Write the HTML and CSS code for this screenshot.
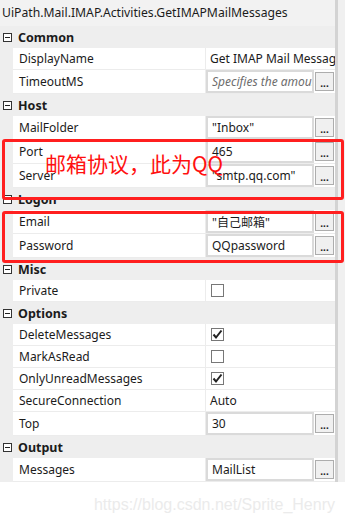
FILE: index.html
```html
<!DOCTYPE html>
<html lang="zh-CN">
  <head>
    <meta charset="UTF-8" />
    <meta name="viewport" content="width=device-width, initial-scale=1.0" />
    <title>GetIMAPMailMessages properties</title>
    <link rel="stylesheet" href="styles.css">
  </head>
  <body>
    <div class="panel">
      <div class="grid">
        <div class="title">UiPath.Mail.IMAP.Activities.GetIMAPMailMessages</div>

        <div class="cat"><span class="toggle"></span>Common</div>
        <div class="row">
          <div class="name">DisplayName</div>
          <div class="val">Get IMAP Mail Messages</div>
        </div>
        <div class="row tall">
          <div class="name">TimeoutMS</div>
          <div class="val"><span class="box ph">Specifies the amount of time</span><span class="dots">...</span></div>
        </div>

        <div class="cat"><span class="toggle"></span>Host</div>
        <div class="row tall">
          <div class="name">MailFolder</div>
          <div class="val"><span class="box">"Inbox"</span><span class="dots">...</span></div>
        </div>
        <div class="row tall">
          <div class="name">Port</div>
          <div class="val"><span class="box">465</span><span class="dots">...</span></div>
        </div>
        <div class="row tall">
          <div class="name">Server</div>
          <div class="val"><span class="box">"smtp.qq.com"</span><span class="dots">...</span></div>
        </div>

        <div class="cat"><span class="toggle"></span>Logon</div>
        <div class="row tall">
          <div class="name">Email</div>
          <div class="val"><span class="box">"自己邮箱"</span><span class="dots">...</span></div>
        </div>
        <div class="row tall">
          <div class="name">Password</div>
          <div class="val"><span class="box">QQpassword</span><span class="dots">...</span></div>
        </div>

        <div class="cat"><span class="toggle"></span>Misc</div>
        <div class="row">
          <div class="name">Private</div>
          <div class="val"><span class="check"></span></div>
        </div>

        <div class="cat"><span class="toggle"></span>Options</div>
        <div class="row">
          <div class="name">DeleteMessages</div>
          <div class="val"><span class="check"><svg viewBox="0 0 13 13" width="13" height="13"><path d="M2.5 6.5 L5 9.5 L10.5 2.5" /></svg></span></div>
        </div>
        <div class="row">
          <div class="name">MarkAsRead</div>
          <div class="val"><span class="check"></span></div>
        </div>
        <div class="row">
          <div class="name">OnlyUnreadMessages</div>
          <div class="val"><span class="check"><svg viewBox="0 0 13 13" width="13" height="13"><path d="M2.5 6.5 L5 9.5 L10.5 2.5" /></svg></span></div>
        </div>
        <div class="row">
          <div class="name">SecureConnection</div>
          <div class="val">Auto</div>
        </div>
        <div class="row tall">
          <div class="name">Top</div>
          <div class="val"><span class="box">30</span><span class="dots">...</span></div>
        </div>

        <div class="cat"><span class="toggle"></span>Output</div>
        <div class="row tall">
          <div class="name">Messages</div>
          <div class="val"><span class="box">MailList</span><span class="dots">...</span></div>
        </div>
      </div>
      <div class="edge"></div>
    </div>

    <div class="watermark">https://blog.csdn.net/Sprite_Henry</div>

    <!-- red annotations drawn over the screenshot -->
    <div class="mark mark-host"></div>
    <div class="mark mark-logon"></div>
    <div class="note">邮箱协议，此为QQ</div>
  </body>
</html>
```

FILE: styles.css
```css
body {
  margin: 0;
  background: #fff;
  font-family: "Noto Sans", "Noto Sans CJK SC", sans-serif;
  font-size: 12px;
  color: #1b1b1b;
}

.panel {
  display: flex;
  width: 345px;
}

.grid {
  width: 335px;
  background: #eeeeee;
}

.edge {
  flex: 1;
  background: #f0f0f0;
  border-left: 3px solid #d3d3d3;
}

.title {
  height: 26px;
  line-height: 26px;
  padding-left: 2px;
  background: #f2f2f2;
  font-size: 12.2px;
  white-space: nowrap;
}

.cat {
  display: flex;
  align-items: center;
  height: 22px;
  padding-left: 3px;
  font-weight: bold;
  font-size: 12.5px;
}

.toggle {
  position: relative;
  width: 9px;
  height: 9px;
  margin-right: 6px;
  border: 1px solid #333;
  box-sizing: border-box;
  background: #fff;
}

.toggle::after {
  content: "";
  position: absolute;
  left: 1px;
  right: 1px;
  top: 3px;
  height: 1px;
  background: #222;
}

.row {
  display: flex;
  height: 22px;
  padding-left: 13px;
}

.row.tall {
  height: 24px;
}

.name,
.val {
  display: flex;
  align-items: center;
  background: #fff;
  border-bottom: 1px solid #ececec;
  white-space: nowrap;
  overflow: hidden;
}

.name {
  width: 193px;
  padding-left: 6px;
  box-sizing: border-box;
  border-right: 1px solid #ececec;
}

.val {
  flex: 1;
  padding-left: 4px;
}

.row.tall .val {
  padding-left: 0;
  align-items: stretch;
}

.box {
  display: flex;
  align-items: center;
  width: 108px;
  box-sizing: border-box;
  padding-left: 4px;
  border: 2px solid #dadada;
  overflow: hidden;
  white-space: nowrap;
}

.box.ph {
  font-style: italic;
  color: #6d6d6d;
}

.dots {
  align-self: center;
  width: 19px;
  height: 19px;
  margin-left: 1px;
  box-sizing: border-box;
  border: 1px solid #adadad;
  background: #f0f0f0;
  font-size: 10px;
  font-weight: bold;
  line-height: 20px;
  text-align: center;
}

.check {
  width: 13px;
  height: 13px;
  margin-left: 1px;
  box-sizing: border-box;
  border: 1px solid #777;
  background: #fff;
}

.check svg {
  display: block;
  margin: -1px;
  fill: none;
  stroke: #222;
  stroke-width: 2;
}

.watermark {
  margin-top: 13px;
  padding-right: 10px;
  text-align: right;
  font-family: "Liberation Sans", sans-serif;
  font-size: 16px;
  line-height: 20px;
  color: #ebebeb;
}

.mark {
  position: absolute;
  left: 2px;
  width: 342px;
  box-sizing: border-box;
  border: 3px solid #ff1f1f;
  border-radius: 3px;
}

.mark-host {
  top: 139px;
  height: 61px;
}

.mark-logon {
  top: 211px;
  height: 52px;
}

.note {
  position: absolute;
  left: 45px;
  top: 150px;
  font-family: "Noto Sans CJK SC", sans-serif;
  font-size: 21px;
  line-height: 26px;
  color: #ff1010;
}
```
